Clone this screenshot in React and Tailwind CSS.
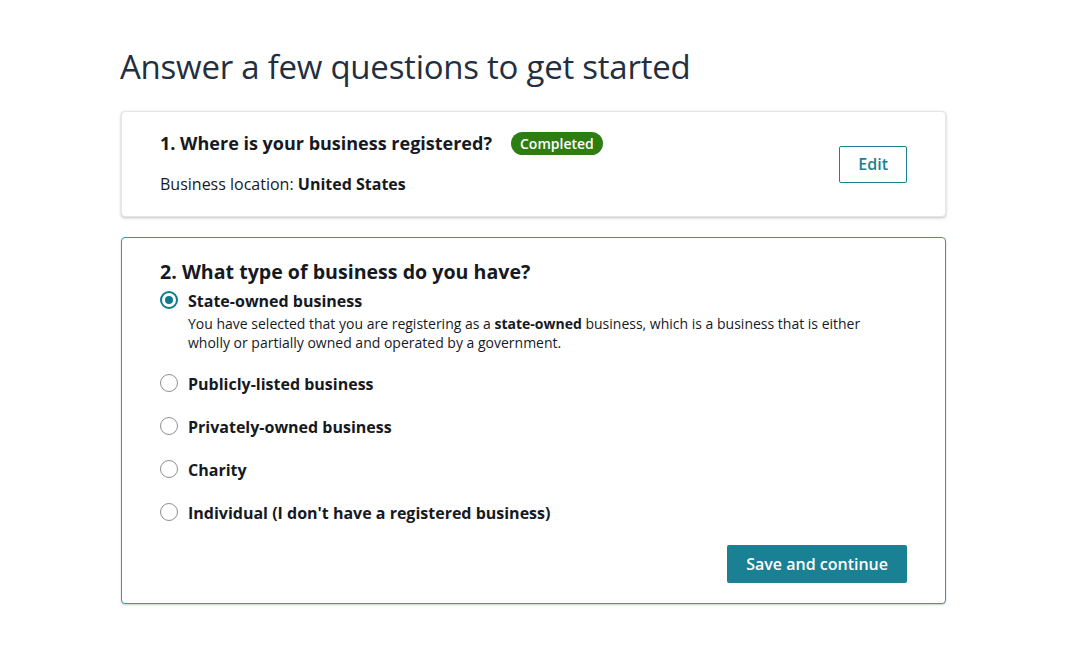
import React, { useState } from 'react';

const options = [
  'State-owned business',
  'Publicly-listed business',
  'Privately-owned business',
  'Charity',
  "Individual (I don't have a registered business)",
];

const Radio = ({ checked }) => (
  <span
    className={
      'mt-[1px] flex h-[18px] w-[18px] shrink-0 items-center justify-center rounded-full border bg-white ' +
      (checked ? 'border-[#0f7a8c] border-2' : 'border-[#8d9196]')
    }
  >
    {checked && <span className="h-[8px] w-[8px] rounded-full bg-[#0f7a8c]" />}
  </span>
);

const App = () => {
  const [selected, setSelected] = useState(0);

  return (
    <div className="min-h-[672px] w-[1080px] bg-white font-['Open_Sans',sans-serif] text-[#16191f]">
      <div className="ml-[121px] w-[825px] pt-[45px]">
        <h1 className="-ml-[1px] text-[33px] leading-[44px] font-normal text-[#232f3e] tracking-[-0.25px]">
          Answer a few questions to get started
        </h1>

        {/* Step 1 - done */}
        <div className="mt-[22px] flex items-center justify-between rounded-[4px] border border-[#e3e5e8] bg-white pl-[38px] pr-[38px] pt-[18px] pb-[21px] shadow-[0_1px_3px_rgba(0,0,0,0.25)]">
          <div>
            <div className="flex items-center gap-[19px]">
              <h2 className="text-[18px] font-bold leading-[26px]">1. Where is your business registered?</h2>
              <span className="rounded-full bg-[#2e7d12] px-[9px] py-[1px] text-[14px] font-semibold leading-[21px] text-white">
                Completed
              </span>
            </div>
            <p className="mt-[17px] text-[16px] leading-[22px]">
              Business location: <span className="font-bold">United States</span>
            </p>
          </div>
          <button className="mt-[4px] rounded-[2px] border border-[#1d7f91] px-[18px] py-[6px] text-[16px] font-semibold leading-[23px] text-[#1d7f91]">
            Edit
          </button>
        </div>

        {/* Step 2 - active */}
        <div className="mt-[20px] rounded-[4px] border border-[#3f95a3] bg-white pl-[38px] pr-[38px] pt-[20px] pb-[20px] shadow-[0_1px_2px_rgba(0,0,0,0.2)]">
          <h2 className="text-[19.6px] font-bold leading-[28px]">2. What type of business do you have?</h2>
          <div className="mt-[4px] flex flex-col gap-[21px]">
            {options.map((opt, i) => (
              <label key={opt} className="flex cursor-pointer items-start gap-[10px]" onClick={() => setSelected(i)}>
                <Radio checked={selected === i} />
                <div>
                  <div className="text-[16px] font-bold leading-[22px]">{opt}</div>
                  {i === 0 && selected === 0 && (
                    <p className="mt-[2px] text-[14px] leading-[19px]">
                      You have selected that you are registering as a <span className="font-bold">state-owned</span> business, which is a business that is either
                      <br />
                      wholly or partially owned and operated by a government.
                    </p>
                  )}
                </div>
              </label>
            ))}
          </div>
          <div className="mt-[21px] flex justify-end">
            <button className="rounded-[2px] bg-[#1a8094] px-[19px] py-[8px] text-[16px] font-semibold leading-[22px] text-white">
              Save and continue
            </button>
          </div>
        </div>
      </div>
    </div>
  );
};

export default App;
